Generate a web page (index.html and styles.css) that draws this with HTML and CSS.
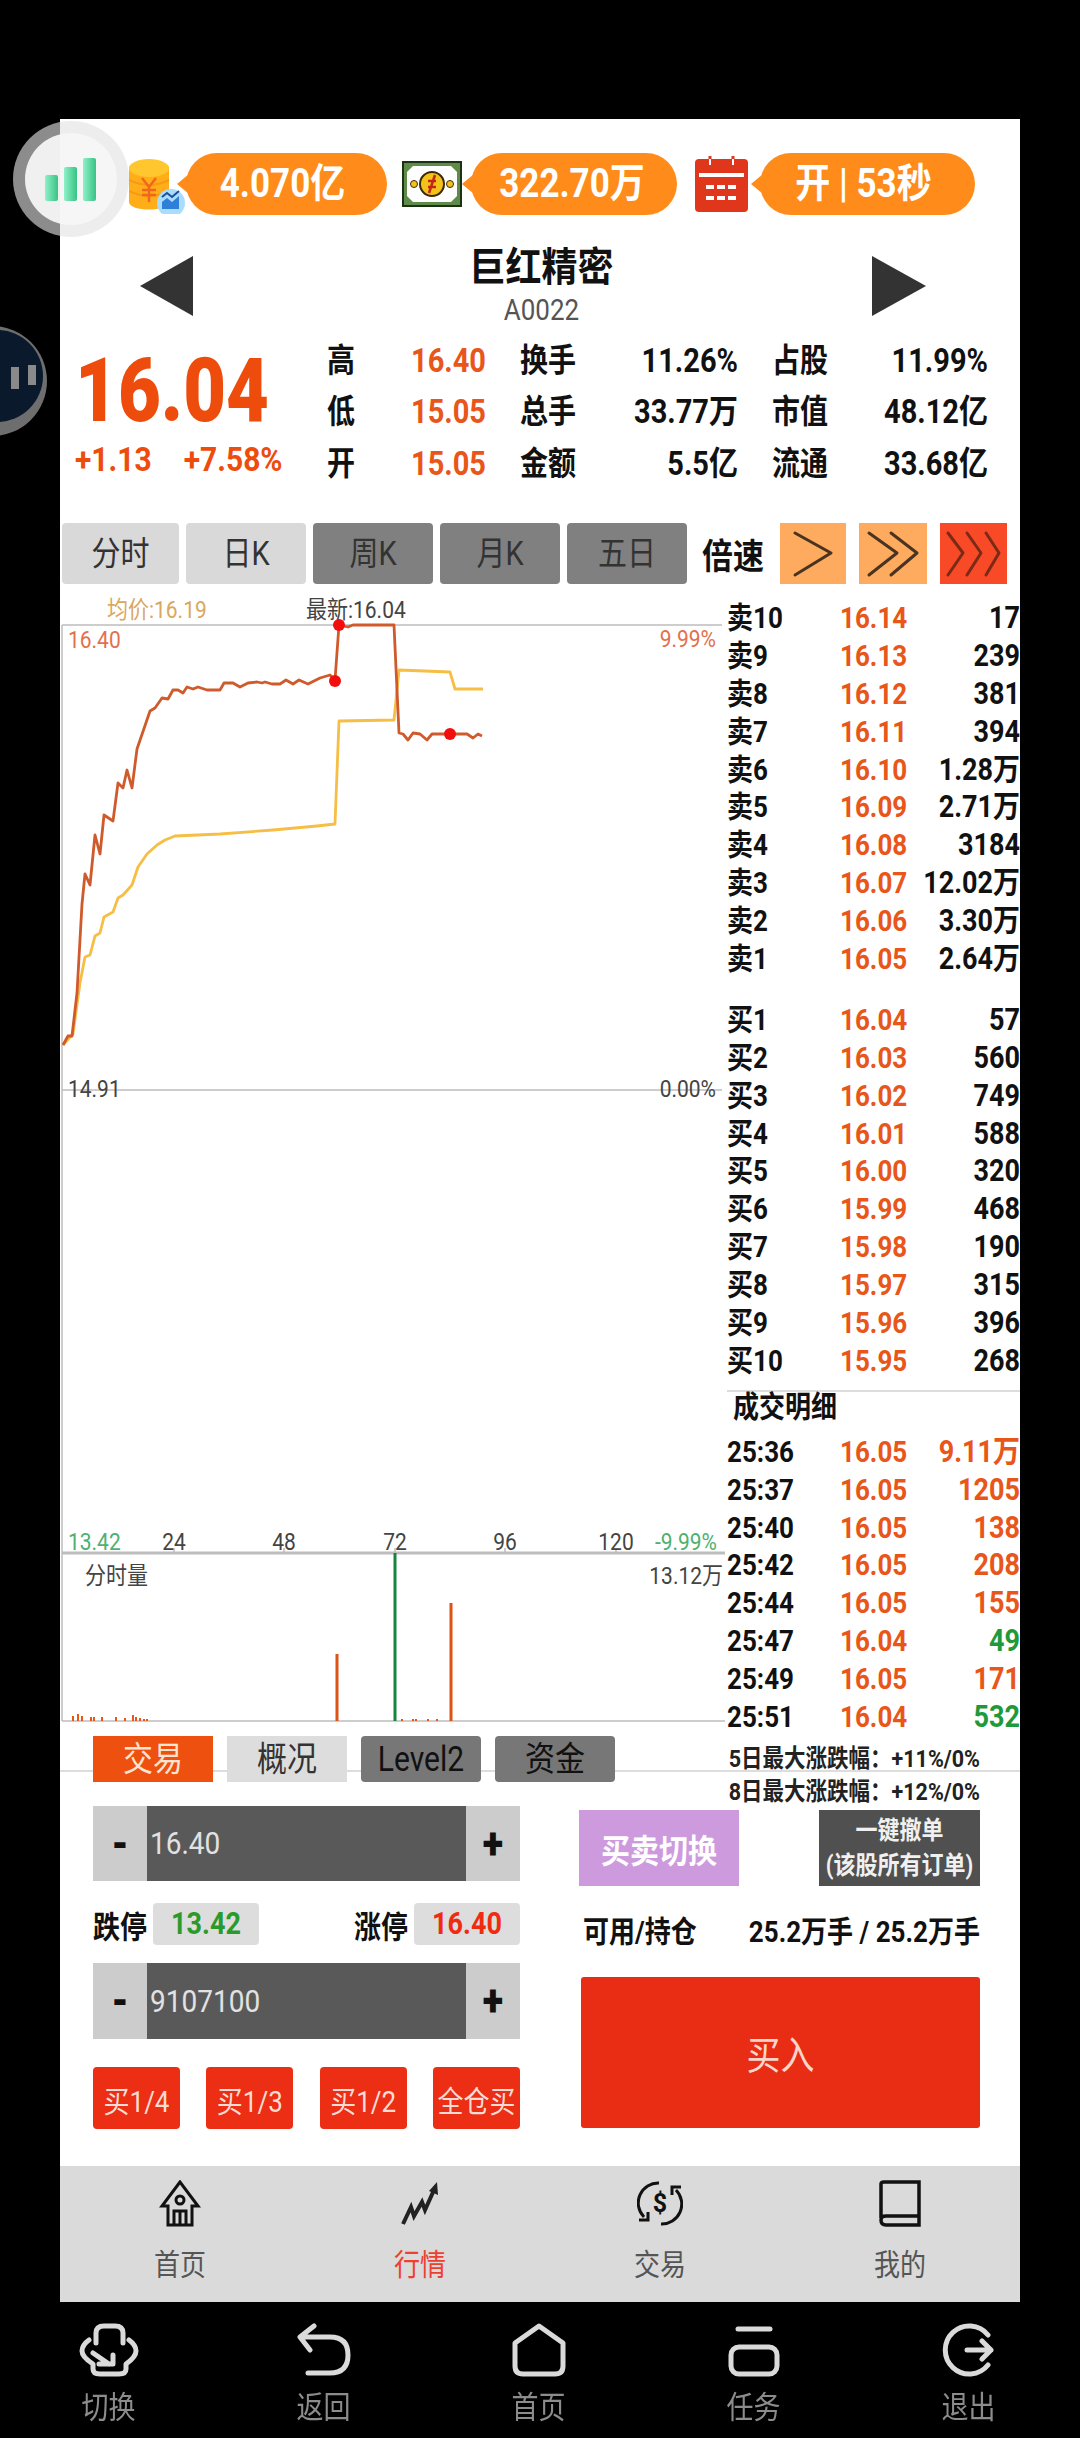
FILE: index.html
```html
<!DOCTYPE html>
<html lang="zh-CN">
<head>
    <meta charset="UTF-8">
    <meta name="viewport" content="width=device-width, initial-scale=1.0">
    <title>巨红精密 A0022</title>
    <link rel="stylesheet" href="styles.css">
</head>
<body>
<div class="screen">
    <div class="app">

        <!-- top status pills -->
        <div class="topbar">
            <svg class="ico-coins" viewBox="0 0 57 56">
                <path d="M0 10 C0 2 40 2 40 10 V44 C40 54 0 54 0 44 Z" fill="#FFAE1A"/>
                <ellipse cx="20" cy="10" rx="20" ry="9" fill="#FFC62E"/>
                <path d="M0 22 Q20 32 40 22 M0 33 Q20 43 40 33" stroke="#F59A12" stroke-width="2" fill="none"/>
                <path d="M13 20 L20 29 L27 20 M20 29 V44 M13 32 H27 M13 37 H27" stroke="#F2661D" stroke-width="2.5" fill="none"/>
                <circle cx="42" cy="45" r="14" fill="#A9DDFB"/>
                <path d="M33 51 V44 L38 40 L43 44 L50 38 V51 Z" fill="#2F7FD8"/>
                <path d="M33 39 L38 35 L43 39 L50 33" stroke="#1D4E9E" stroke-width="2" fill="none"/>
            </svg>
            <div class="pill pill-a"><span class="st">4.070亿</span></div>
            <svg class="ico-money" viewBox="0 0 60 46">
                <rect width="60" height="46" fill="#1C3313"/>
                <rect x="2" y="2" width="56" height="42" fill="#5E8A4A"/>
                <path d="M5 11 L11 5 H49 L55 11 V35 L49 41 H11 L5 35 Z" fill="#fff"/>
                <circle cx="30" cy="23" r="12" fill="#F3C21B" stroke="#3A2A0A" stroke-width="2"/>
                <path d="M33 14 L27 32 M26 20 H34 M26 26 H34" stroke="#C4261B" stroke-width="2.5"/>
                <circle cx="12" cy="23" r="3.5" fill="#F3C21B" stroke="#3A2A0A"/>
                <circle cx="48" cy="23" r="3.5" fill="#F3C21B" stroke="#3A2A0A"/>
            </svg>
            <div class="pill pill-b"><span class="st">322.70万</span></div>
            <svg class="ico-cal" viewBox="0 0 53 56">
                <rect y="3" width="53" height="53" rx="4" fill="#E0361B"/>
                <rect x="4" y="17" width="45" height="4" fill="#fff"/>
                <path d="M15 0 V10 M38 0 V10" stroke="#E0361B" stroke-width="3"/>
                <path d="M15 3 V9 M38 3 V9" stroke="#fff" stroke-width="2"/>
                <path d="M11 31 H42 M11 42 H42" stroke="#fff" stroke-width="4" stroke-dasharray="8 3"/>
            </svg>
            <div class="pill pill-c"><span class="st">开 | 53秒</span></div>
        </div>

        <!-- stock title -->
        <div class="title-row">
            <div class="arrow arrow-left"></div>
            <div class="title">
                <div class="title-name">巨红精密</div>
                <div class="title-code">A0022</div>
            </div>
            <div class="arrow arrow-right"></div>
        </div>

        <!-- price and stats -->
        <div class="quote">
            <div class="quote-main">
                <div class="quote-price">16.04</div>
                <div class="quote-change"><span>+1.13</span><span>+7.58%</span></div>
            </div>
            <div class="stats">
                <div class="lab">高</div><div class="val up">16.40</div><div class="lab">换手</div><div class="val">11.26%</div><div class="lab">占股</div><div class="val">11.99%</div>
                <div class="lab">低</div><div class="val up">15.05</div><div class="lab">总手</div><div class="val">33.77万</div><div class="lab">市值</div><div class="val">48.12亿</div>
                <div class="lab">开</div><div class="val up">15.05</div><div class="lab">金额</div><div class="val">5.5亿</div><div class="lab">流通</div><div class="val">33.68亿</div>
            </div>
        </div>

        <!-- period tabs and speed -->
        <div class="periods">
            <div class="period period-first"><span class="st">分时</span></div>
            <div class="period"><span class="st">日K</span></div>
            <div class="period dark"><span class="st">周K</span></div>
            <div class="period dark"><span class="st">月K</span></div>
            <div class="period dark"><span class="st">五日</span></div>
            <div class="speed-label"><span class="st">倍速</span></div>
            <div class="speed s1">
                <svg viewBox="0 0 66 61"><path d="M15 10 L51 30 L15 52" class="chev"/></svg>
            </div>
            <div class="speed s2">
                <svg viewBox="0 0 68 61"><path d="M10 10 L38 30 L10 52 M32 10 L58 30 L32 52" class="chev"/></svg>
            </div>
            <div class="speed s3">
                <svg viewBox="0 0 67 61"><path d="M8 10 L23 30 L8 52 M27 10 L41 30 L27 52 M46 10 L59 30 L46 52" class="chev chev-red"/></svg>
            </div>
        </div>

        <div class="market">
            <!-- time-share chart, coordinates are the picture's own -->
            <svg class="chart" viewBox="60 584 665 1152">
                <path d="M62 625 V1721 M62 625 H722 M62 1090 H722 M62 1721 H725" class="grid-line"/>
                <path d="M62 1553 H725" class="grid-line grid-strong"/>
                <path d="M174 1553 v-5 M284 1553 v-5 M395 1553 v-5 M505 1553 v-5 M616 1553 v-5" class="grid-line"/>

                <polyline class="line-avg" points="63,1045 73,1034 80,983 85,957 90,955 95,936 100,933 104,917 113,912 118,898 123,895 132,885 138,867 147,854 157,845 165,840 175,836 220,834 273,830 317,826 335,824 339,721 394,720 399,670 450,672 455,689 483,689"/>
                <polyline class="line-price" points="63,1045 68,1036 72,1036 77,993 82,904 85,874 90,885 95,835 100,854 104,815 113,821 118,783 123,788 127,770 132,788 137,749 150,711 155,708 162,698 168,699 173,690 178,690 183,693 187,687 193,689 198,687 207,690 220,690 224,683 233,683 240,687 248,683 257,682 262,683 265,682 272,684 280,684 286,680 293,684 299,680 308,684 320,678 330,675 335,680 339,625 348,627 353,625 394,625 399,733 403,734 408,740 413,733 420,734 427,740 432,734 467,734 473,738 478,734 482,736"/>
                <circle cx="339" cy="625" r="6" class="dot"/>
                <circle cx="335" cy="681" r="6" class="dot"/>
                <circle cx="450" cy="734" r="6" class="dot"/>

                <text x="107" y="617" class="lbl c-avg">均价:16.19</text>
                <text x="306" y="617" class="lbl c-dark">最新:16.04</text>
                <text x="68" y="647" class="lbl c-up">16.40</text>
                <text x="716" y="646" class="lbl c-up end">9.99%</text>
                <text x="68" y="1096" class="lbl c-dark">14.91</text>
                <text x="716" y="1096" class="lbl c-dark end">0.00%</text>
                <text x="68" y="1549" class="lbl c-down">13.42</text>
                <text x="174" y="1549" class="lbl c-dark mid">24</text>
                <text x="284" y="1549" class="lbl c-dark mid">48</text>
                <text x="395" y="1549" class="lbl c-dark mid">72</text>
                <text x="505" y="1549" class="lbl c-dark mid">96</text>
                <text x="616" y="1549" class="lbl c-dark mid">120</text>
                <text x="717" y="1549" class="lbl c-down end">-9.99%</text>
                <text x="85" y="1583" class="lbl c-dark">分时量</text>
                <text x="723" y="1583" class="lbl c-dark end">13.12万</text>

                <path d="M73 1721 v-5 M78 1721 v-7 M82 1721 v-5 M91 1721 v-4 M94 1721 v-4 M102 1721 v-4 M116 1721 v-4 M125 1721 v-3 M133 1721 v-6 M136 1721 v-4 M140 1721 v-3 M144 1721 v-2 M147 1721 v-2 M402 1721 v-2 M413 1721 v-2 M416 1721 v-2 M428 1721 v-2 M437 1721 v-2" class="vol-small"/>
                <path d="M337 1721 V1654 M451 1721 V1603" class="vol-up"/>
                <path d="M395 1721 V1553" class="vol-down"/>
            </svg>

            <!-- order book and trades -->
            <div class="book">
                <div class="rows">
                    <div class="row"><b class="st">卖10</b><i class="st">16.14</i><b class="st">17</b></div>
                    <div class="row"><b class="st">卖9</b><i class="st">16.13</i><b class="st">239</b></div>
                    <div class="row"><b class="st">卖8</b><i class="st">16.12</i><b class="st">381</b></div>
                    <div class="row"><b class="st">卖7</b><i class="st">16.11</i><b class="st">394</b></div>
                    <div class="row"><b class="st">卖6</b><i class="st">16.10</i><b class="st">1.28万</b></div>
                    <div class="row"><b class="st">卖5</b><i class="st">16.09</i><b class="st">2.71万</b></div>
                    <div class="row"><b class="st">卖4</b><i class="st">16.08</i><b class="st">3184</b></div>
                    <div class="row"><b class="st">卖3</b><i class="st">16.07</i><b class="st">12.02万</b></div>
                    <div class="row"><b class="st">卖2</b><i class="st">16.06</i><b class="st">3.30万</b></div>
                    <div class="row"><b class="st">卖1</b><i class="st">16.05</i><b class="st">2.64万</b></div>
                </div>
                <div class="rows rows-buy">
                    <div class="row"><b class="st">买1</b><i class="st">16.04</i><b class="st">57</b></div>
                    <div class="row"><b class="st">买2</b><i class="st">16.03</i><b class="st">560</b></div>
                    <div class="row"><b class="st">买3</b><i class="st">16.02</i><b class="st">749</b></div>
                    <div class="row"><b class="st">买4</b><i class="st">16.01</i><b class="st">588</b></div>
                    <div class="row"><b class="st">买5</b><i class="st">16.00</i><b class="st">320</b></div>
                    <div class="row"><b class="st">买6</b><i class="st">15.99</i><b class="st">468</b></div>
                    <div class="row"><b class="st">买7</b><i class="st">15.98</i><b class="st">190</b></div>
                    <div class="row"><b class="st">买8</b><i class="st">15.97</i><b class="st">315</b></div>
                    <div class="row"><b class="st">买9</b><i class="st">15.96</i><b class="st">396</b></div>
                    <div class="row"><b class="st">买10</b><i class="st">15.95</i><b class="st">268</b></div>
                </div>
                <div class="trades-head"><span class="st">成交明细</span></div>
                <div class="rows">
                    <div class="row"><b class="st">25:36</b><i class="st">16.05</i><b class="st up">9.11万</b></div>
                    <div class="row"><b class="st">25:37</b><i class="st">16.05</i><b class="st up">1205</b></div>
                    <div class="row"><b class="st">25:40</b><i class="st">16.05</i><b class="st up">138</b></div>
                    <div class="row"><b class="st">25:42</b><i class="st">16.05</i><b class="st up">208</b></div>
                    <div class="row"><b class="st">25:44</b><i class="st">16.05</i><b class="st up">155</b></div>
                    <div class="row"><b class="st">25:47</b><i class="st">16.04</i><b class="st down">49</b></div>
                    <div class="row"><b class="st">25:49</b><i class="st">16.05</i><b class="st up">171</b></div>
                    <div class="row"><b class="st">25:51</b><i class="st">16.04</i><b class="st down">532</b></div>
                </div>
            </div>
        </div>

        <!-- trade panel -->
        <div class="panel">
            <div class="panel-top">
                <div class="panel-tabs">
                    <div class="ptab on"><span class="st">交易</span></div>
                    <div class="ptab"><span class="st">概况</span></div>
                    <div class="ptab dark"><span class="st">Level2</span></div>
                    <div class="ptab dark"><span class="st">资金</span></div>
                </div>
                <div class="range">
                    <div><span class="st">5日最大涨跌幅：+11%/0%</span></div>
                    <div><span class="st">8日最大涨跌幅：+12%/0%</span></div>
                </div>
            </div>
            <div class="panel-body">
                <div class="form">
                    <div class="stepper">
                        <div class="step"><span class="st">-</span></div>
                        <div class="step-val"><span class="st">16.40</span></div>
                        <div class="step"><span class="st">+</span></div>
                    </div>
                    <div class="limits">
                        <div class="limit"><span class="st limit-lab">跌停</span><span class="chip down"><span class="st">13.42</span></span></div>
                        <div class="limit"><span class="st limit-lab">涨停</span><span class="chip hot"><span class="st">16.40</span></span></div>
                    </div>
                    <div class="stepper stepper-qty">
                        <div class="step"><span class="st">-</span></div>
                        <div class="step-val"><span class="st">9107100</span></div>
                        <div class="step"><span class="st">+</span></div>
                    </div>
                    <div class="parts">
                        <div class="part"><span class="st">买1/4</span></div>
                        <div class="part"><span class="st">买1/3</span></div>
                        <div class="part"><span class="st">买1/2</span></div>
                        <div class="part"><span class="st">全仓买</span></div>
                    </div>
                </div>
                <div class="side">
                    <div class="side-btns">
                        <div class="switch"><span class="st">买卖切换</span></div>
                        <div class="cancel"><span class="st">一键撤单<br>(该股所有订单)</span></div>
                    </div>
                    <div class="hold"><span class="st">可用/持仓</span><span class="st">25.2万手 / 25.2万手</span></div>
                    <div class="buy"><span class="st">买入</span></div>
                </div>
            </div>
        </div>

        <!-- app tab bar -->
        <div class="nav">
            <div class="nav-item">
                <svg viewBox="0 0 42 47" class="nav-ico">
                    <path d="M21 2 L3 26 H9 V45 H33 V26 H39 Z M15 45 V31 H27 V45 M21 31 V45" class="ico-line"/>
                    <circle cx="21" cy="20" r="4" class="ico-line"/>
                </svg>
                <span class="st">首页</span>
            </div>
            <div class="nav-item on">
                <svg viewBox="0 0 42 47" class="nav-ico">
                    <path d="M4 44 L12 27 L15 36 L23 22 L26 30 L35 10" class="ico-line ico-heavy"/>
                    <path d="M30 11 L38 2 L39 15 Z" fill="#222"/>
                </svg>
                <span class="st">行情</span>
            </div>
            <div class="nav-item">
                <svg viewBox="0 0 46 47" class="nav-ico">
                    <path d="M22 3 A20 20 0 0 0 7 37 M24 44 A20 20 0 0 0 39 10" class="ico-line"/>
                    <path d="M2 40 H11 V32 M44 7 H35 V15" class="ico-line"/>
                    <text x="23" y="32" class="ico-dollar">$</text>
                </svg>
                <span class="st">交易</span>
            </div>
            <div class="nav-item">
                <svg viewBox="0 0 42 47" class="nav-ico">
                    <path d="M2 38 V4 Q2 2 5 2 H40 V45 H7 Q2 45 2 40 Q2 36 7 36 H40" class="ico-line ico-book"/>
                </svg>
                <span class="st">我的</span>
            </div>
        </div>
    </div>

    <!-- system bar -->
    <div class="sysbar">
        <div class="sys-item">
            <svg viewBox="0 0 60 54" class="sys-ico">
                <path d="M17 20 V10 Q17 3 25 3 H36 Q44 3 44 10 V20 M10 17 Q3 22 3 28 Q3 34 14 41 V46 Q14 51 21 51 H40 Q47 51 47 46 V41 Q57 34 57 28 Q57 22 50 17 M14 30 L30 41 M20 41 H34 V32" class="sys-line"/>
            </svg>
            <span class="st">切换</span>
        </div>
        <div class="sys-item">
            <svg viewBox="0 0 60 54" class="sys-ico">
                <path d="M20 3 L6 14 L16 27 M8 14 H36 Q54 14 54 32 Q54 50 36 50 H14" class="sys-line"/>
            </svg>
            <span class="st">返回</span>
        </div>
        <div class="sys-item">
            <svg viewBox="0 0 60 54" class="sys-ico">
                <path d="M6 20 L30 3 L54 20 V43 Q54 51 46 51 H14 Q6 51 6 43 Z" class="sys-line"/>
            </svg>
            <span class="st">首页</span>
        </div>
        <div class="sys-item">
            <svg viewBox="0 0 60 54" class="sys-ico">
                <path d="M14 6 H46" class="sys-line"/>
                <rect x="7" y="24" width="46" height="27" rx="8" class="sys-line"/>
            </svg>
            <span class="st">任务</span>
        </div>
        <div class="sys-item">
            <svg viewBox="0 0 60 54" class="sys-ico">
                <path d="M49 12 A24 24 0 1 0 49 42 M28 27 H52 M43 18 L52 27 L43 36" class="sys-line"/>
            </svg>
            <span class="st">退出</span>
        </div>
    </div>
</div>

<!-- floating assistant buttons -->
<svg class="float float-bars" viewBox="0 0 120 120">
    <defs>
        <linearGradient id="barFill" x1="0" y1="0" x2="1" y2="0">
            <stop offset="0" stop-color="#8FF0C8"/>
            <stop offset="1" stop-color="#38C384"/>
        </linearGradient>
    </defs>
    <circle cx="60" cy="60" r="58" fill="#E2E2E2" fill-opacity="0.62"/>
    <circle cx="60" cy="60" r="46" fill="#F6F6F6" fill-opacity="0.94"/>
    <rect x="34" y="56" width="13" height="26" rx="2" fill="url(#barFill)"/>
    <rect x="53" y="48" width="13" height="34" rx="2" fill="url(#barFill)"/>
    <rect x="72" y="39" width="13" height="43" rx="2" fill="url(#barFill)"/>
</svg>
<svg class="float float-pause" viewBox="0 0 48 110">
    <circle cx="-8" cy="55" r="55" fill="#6E6E6E"/>
    <circle cx="-3" cy="50" r="46" fill="#0A1A2C"/>
    <rect x="11" y="41" width="8" height="22" fill="#8A8A8A"/>
    <rect x="28" y="39" width="8" height="20" fill="#8A8A8A"/>
</svg>
</body>
</html>
```

FILE: styles.css
```css
/* Basic page */
* {
    box-sizing: border-box;
}

html, body {
    margin: 0;
    padding: 0;
    background-color: #000;
}

body {
    position: relative;
    width: 1080px;
    height: 2438px;
    overflow: hidden;
    font-family: Roboto, "Noto Sans CJK SC", sans-serif;
    color: #111;
}

.screen {
    padding-top: 119px;
    filter: blur(0.5px);
}

.app {
    width: 960px;
    height: 2183px;
    margin-left: 60px;
    background-color: #fff;
    overflow: hidden;
}

/* the capture is a little taller than it is wide */
.st {
    display: inline-block;
    transform: scaleY(1.15);
}

.up { color: #E8561A; }
.down { color: #1E9A3C; }

/* Top pills */
.topbar {
    display: flex;
    align-items: center;
    height: 62px;
    margin-top: 34px;
    padding-left: 69px;
}

.ico-coins { width: 57px; height: 56px; margin-top: 4px; }
.ico-money { width: 60px; height: 46px; margin-left: 15px; }
.ico-cal { width: 53px; height: 56px; margin-left: 18px; }

.pill {
    position: relative;
    display: flex;
    align-items: center;
    justify-content: center;
    height: 62px;
    padding-right: 8px;
    border-radius: 31px;
    background-color: #FF8C1A;
    color: #fff;
    font-size: 35px;
    font-weight: 700;
    line-height: 44px;
}

.pill::before {
    content: "";
    position: absolute;
    left: -9px;
    top: 21px;
    border-top: 10px solid transparent;
    border-bottom: 10px solid transparent;
    border-right: 12px solid #FF8C1A;
}

.pill-a { width: 201px; }
.pill-b { width: 206px; margin-left: 9px; padding-right: 4px; }
.pill-c { width: 215px; margin-left: 12px; }

/* Title */
.title-row {
    display: flex;
    justify-content: space-between;
    align-items: center;
    height: 120px;
    padding: 0 94px 0 80px;
}

.title {
    text-align: center;
    align-self: flex-start;
    margin-left: 18px;
    padding-top: 32px;
}

.title-name {
    font-size: 36px;
    font-weight: 700;
    line-height: 42px;
    transform: scaleY(1.12);
}

.title-code {
    margin-top: 6px;
    font-size: 26px;
    line-height: 30px;
    color: #555;
    transform: scaleY(1.1);
}

.arrow {
    margin-top: 22px;
    border-top: 30px solid transparent;
    border-bottom: 30px solid transparent;
}

.arrow-left { border-right: 53px solid #333; }
.arrow-right { border-left: 54px solid #333; }

/* Quote */
.quote {
    display: flex;
    height: 155px;
}

.quote-main {
    width: 267px;
    padding: 12px 0 0 15px;
    color: #EE4C0C;
}

.quote-price {
    font-size: 74px;
    font-weight: 900;
    line-height: 88px;
    transform: scaleY(1.2);
    transform-origin: left center;
}

.quote-change {
    display: flex;
    gap: 32px;
    font-size: 30px;
    font-weight: 700;
    line-height: 50px;
    transform: scaleY(1.12);
}

.stats {
    display: grid;
    grid-template-columns: 28px 131px 90px 162px 90px 160px;
    grid-auto-rows: 51.5px;
    align-items: center;
    font-size: 28px;
    font-weight: 700;
    line-height: 36px;
}

.lab {
    text-align: right;
    transform: scaleY(1.17);
}

.val {
    font-size: 29px;
    font-weight: 700;
    text-align: right;
    transform: scaleY(1.15);
}

/* Period tabs */
.periods {
    display: flex;
    align-items: stretch;
    height: 61px;
    margin-top: 33px;
    padding-left: 2px;
}

.period {
    display: flex;
    align-items: center;
    justify-content: center;
    width: 120px;
    margin-right: 7px;
    border-radius: 4px;
    background-color: #D9D9D9;
    color: #333;
    font-size: 29px;
    line-height: 36px;
}

.period-first { width: 117px; }
.period.dark { background-color: #808080; }

.speed-label {
    display: flex;
    align-items: center;
    margin-left: 8px;
    width: 78px;
    font-size: 31px;
    font-weight: 700;
}

.speed svg {
    display: block;
    height: 61px;
    width: 100%;
}

.speed.s1 { width: 66px; background-color: #FFAB5F; }
.speed.s2 { width: 68px; margin-left: 13px; background-color: #FFAB5F; }
.speed.s3 { width: 67px; margin-left: 13px; background-color: #F84A27; }

.chev {
    fill: none;
    stroke: #4A3320;
    stroke-width: 3;
    stroke-linecap: round;
    stroke-linejoin: round;
}

.chev-red { stroke: #7A2A16; }

/* Chart and book */
.market {
    display: flex;
    height: 1152px;
}

.chart {
    display: block;
    width: 665px;
    height: 1152px;
    flex: none;
}

.grid-line {
    fill: none;
    stroke: #BDBDBD;
    stroke-width: 1.5;
}

.grid-strong { stroke-width: 3; }

.line-price, .line-avg {
    fill: none;
    stroke-width: 2.8;
    stroke-linejoin: round;
}

.line-price { stroke: #CF5A2C; }
.line-avg { stroke: #F6BE45; }
.dot { fill: #F30E0E; }

.lbl {
    font-size: 21px;
    transform-box: fill-box;
    transform-origin: center;
    transform: scaleY(1.15);
}

.end { text-anchor: end; }
.mid { text-anchor: middle; }
.c-avg { fill: #D9A860; }
.c-dark { fill: #444; }
.c-up { fill: #E4704C; }
.c-down { fill: #4FB06F; }

.vol-small, .vol-up, .vol-down {
    fill: none;
    stroke-width: 3;
}

.vol-small { stroke: #E8561A; stroke-width: 2; }
.vol-up { stroke: #DC5316; }
.vol-down { stroke: #14853F; }

.book {
    flex: 1;
    padding: 15px 0 0 2px;
    overflow: hidden;
}

.rows-buy {
    margin-top: 23px;
}

.row {
    display: grid;
    grid-template-columns: 113px 1fr auto;
    align-items: center;
    height: 37.9px;
    font-size: 26px;
    line-height: 34px;
    white-space: nowrap;
}

.row b {
    font-weight: 700;
}

.row b:last-child {
    text-align: right;
    font-size: 27px;
}

.row i {
    font-style: normal;
    font-weight: 700;
    font-size: 26px;
    color: #E8561A;
}

.trades-head {
    margin-top: 10px;
    padding-left: 6px;
    border-top: 2px solid #DDD;
    height: 43px;
    font-size: 26px;
    font-weight: 700;
    line-height: 30px;
}

/* Trade panel */
.panel {
    position: relative;
    height: 430px;
}

.panel::before {
    content: "";
    position: absolute;
    left: 0;
    right: 0;
    top: 34px;
    border-top: 2px solid #DDD;
}

.panel-top {
    position: relative;
    display: flex;
    justify-content: space-between;
    height: 70px;
    padding: 0 40px 0 33px;
}

.panel-tabs {
    display: flex;
    gap: 14px;
    height: 46px;
}

.ptab {
    display: flex;
    align-items: center;
    justify-content: center;
    width: 120px;
    background-color: #DDD;
    color: #333;
    font-size: 30px;
    line-height: 36px;
}

.ptab.on { background-color: #EE5010; color: #FDE3D2; }
.ptab.dark { background-color: #777; border-radius: 4px; color: #111; }

.range {
    padding-top: 6px;
    font-size: 21.5px;
    font-weight: 700;
    line-height: 33px;
    color: #222;
    white-space: nowrap;
}

.panel-body {
    display: flex;
    padding-left: 33px;
}

.form {
    width: 427px;
}

.stepper {
    display: flex;
    height: 75px;
}

.stepper-qty {
    height: 76px;
    margin-top: 18px;
}

.step {
    display: flex;
    align-items: center;
    justify-content: center;
    width: 54px;
    flex: none;
    background-color: #CCC;
    font-size: 38px;
    font-weight: 900;
    color: #111;
}

.step-val {
    flex: 1;
    display: flex;
    align-items: center;
    padding-left: 3px;
    background-color: #595959;
    color: #E2E2E2;
    font-size: 28px;
}

.limits {
    display: flex;
    justify-content: space-between;
    margin-top: 22px;
}

.limit {
    display: flex;
    align-items: center;
    gap: 6px;
}

.limit-lab {
    font-size: 27px;
    font-weight: 700;
}

.chip {
    display: flex;
    align-items: center;
    justify-content: center;
    width: 106px;
    height: 42px;
    border-radius: 4px;
    background-color: #DDD;
    font-size: 27px;
    font-weight: 700;
}

.chip.down { color: #2A9A2A; }
.chip.hot { color: #F02C10; }

.parts {
    display: flex;
    justify-content: space-between;
    margin-top: 28px;
}

.part {
    display: flex;
    align-items: center;
    justify-content: center;
    width: 87px;
    height: 62px;
    border-radius: 4px;
    background-color: #EB2E14;
    color: #FBDCD4;
    font-size: 26px;
    white-space: nowrap;
}

.side {
    width: 401px;
    margin-left: 59px;
    padding-top: 4px;
}

.side-btns {
    display: flex;
    justify-content: space-between;
    height: 76px;
}

.switch, .cancel {
    display: flex;
    align-items: center;
    justify-content: center;
    font-weight: 700;
    text-align: center;
    color: #fff;
}

.switch {
    width: 160px;
    background-color: #CE9ADE;
    font-size: 29px;
}

.cancel {
    width: 161px;
    background-color: #505050;
    font-size: 22px;
    line-height: 31px;
    color: #F0F0F0;
}

.hold {
    display: flex;
    justify-content: space-between;
    margin-top: 26px;
    padding-left: 4px;
    font-size: 26px;
    font-weight: 700;
    line-height: 40px;
    white-space: nowrap;
}

.hold .st:last-child {
    font-size: 26px;
}

.buy {
    display: flex;
    align-items: center;
    justify-content: center;
    height: 151px;
    margin: 25px 0 0 2px;
    border-radius: 3px;
    background-color: #E92D14;
    color: #FBD5CB;
    font-size: 34px;
}

/* App tab bar */
.nav {
    display: grid;
    grid-template-columns: repeat(4, 1fr);
    height: 136px;
    padding-top: 14px;
    background-color: #D9DAD9;
    color: #555;
    font-size: 26px;
    line-height: 30px;
}

.nav-item {
    display: flex;
    flex-direction: column;
    align-items: center;
}

.nav-item.on { color: #EE4030; }

.nav-ico {
    width: 46px;
    height: 47px;
    margin-bottom: 23px;
}

.ico-line {
    fill: none;
    stroke: #111;
    stroke-width: 3;
}

.ico-heavy { stroke: #222; stroke-width: 4; }
.ico-book { stroke-width: 3.5; }

.ico-dollar {
    font-size: 25px;
    font-weight: 700;
    text-anchor: middle;
    fill: #111;
}

/* System bar */
.sysbar {
    display: grid;
    grid-template-columns: repeat(5, 215px);
    padding: 21px 0 0 1px;
    color: #8C8C8C;
    font-size: 27px;
    line-height: 30px;
}

.sys-item {
    display: flex;
    flex-direction: column;
    align-items: center;
}

.sys-ico {
    width: 60px;
    height: 54px;
    margin-bottom: 16px;
}

.sys-line {
    fill: none;
    stroke: #DADADA;
    stroke-width: 5;
    stroke-linecap: round;
    stroke-linejoin: round;
}

/* Floating buttons */
.float {
    position: absolute;
    left: 0;
}

.float-bars {
    left: 11px;
    top: 119px;
    width: 120px;
    height: 120px;
}

.float-pause {
    top: 326px;
    width: 48px;
    height: 110px;
}
```
